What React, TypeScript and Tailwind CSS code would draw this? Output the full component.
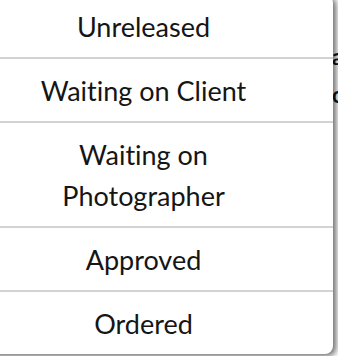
import React from 'react';

const statuses = ['Unreleased', 'Waiting on Client', 'Waiting on Photographer', 'Approved', 'Ordered'];

export default function App() {
  return (
    <div className="relative w-[338px] h-[356px] overflow-hidden bg-white" style={{ fontFamily: 'Lato, "Noto Sans", sans-serif' }}>
      {/* page content showing behind the menu */}
      <div className="pl-[332px] pt-[44px] flex flex-col gap-[12px] text-[22px] leading-[26px] text-[#151515] font-bold">
        <span>a</span>
        <span>c</span>
      </div>

      <ul className="absolute top-[-5px] left-[-46px] w-[379px] bg-white rounded-lg shadow-[3px_2px_6px_rgba(0,0,0,0.6)] text-[#151515] [font-variant-ligatures:none]">
        {statuses.map((s, i) => (
          <li
            key={s}
            className={`px-[60px] py-[10.5px] text-center text-[27px] leading-[41px] ${i < statuses.length - 1 ? 'border-b-2 border-[#d2d2d2]' : ''}`}
          >
            {s}
          </li>
        ))}
      </ul>
    </div>
  );
}
